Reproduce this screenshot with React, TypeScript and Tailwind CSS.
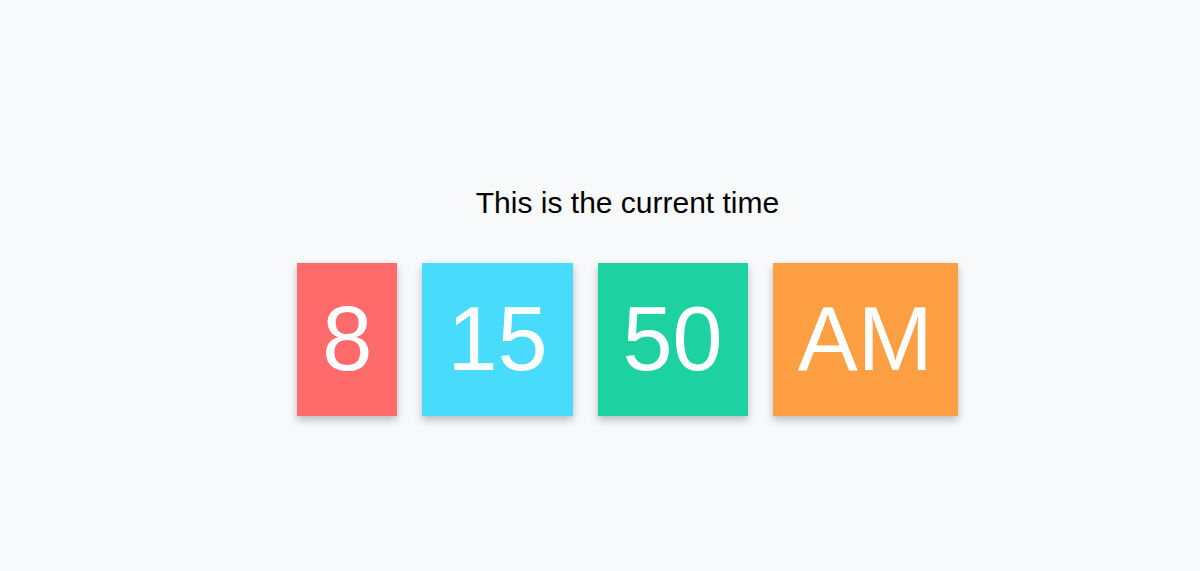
const UNITS = [
  { value: '8', bg: 'bg-[#ff6b6b]' },
  { value: '15', bg: 'bg-[#48dbfb]' },
  { value: '50', bg: 'bg-[#1dd1a1]' },
  { value: 'AM', bg: 'bg-[#ff9f43]' },
]

export default function App() {
  return (
    <div className="min-h-[571px] bg-[#f8f9fa] font-['Liberation_Sans',Arial,sans-serif] pt-[186px] pl-[55px]">
      <div className="flex flex-col items-center">
        {/* Heading */}
        <h1 className="text-[30px] leading-[34px] text-black">This is the current time</h1>

        {/* Time blocks */}
        <div className="flex gap-[25px] mt-[43px]">
          {UNITS.map((u) => (
            <div
              key={u.value}
              className={`${u.bg} text-white text-[90px] leading-[103px] px-[25px] py-[25px] shadow-[0_4px_8px_rgba(0,0,0,0.25)]`}
            >
              {u.value}
            </div>
          ))}
        </div>
      </div>
    </div>
  )
}
